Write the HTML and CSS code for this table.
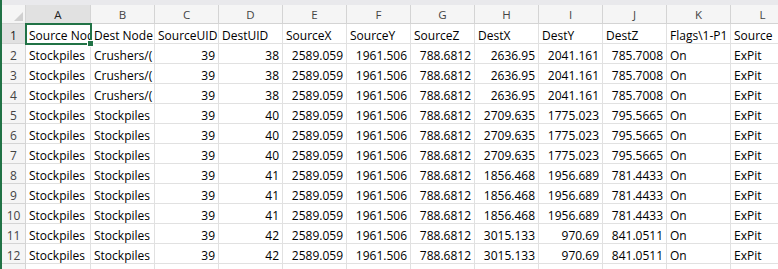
FILE: index.html
```html
<!DOCTYPE html>
<html lang="en">
  <head>
    <meta charset="UTF-8" />
    <title>Sheet1</title>
    <link rel="stylesheet" href="styles.css">
  </head>
  <body>
    <div class="window">
      <div class="edge"></div>
      <div class="sheet">
        <div class="top-strip"></div>
        <table class="grid">
          <thead>
            <tr>
              <th class="corner"><span class="tri"></span></th>
              <th class="col-a active">A</th>
              <th>B</th>
              <th>C</th>
              <th>D</th>
              <th>E</th>
              <th>F</th>
              <th>G</th>
              <th>H</th>
              <th>I</th>
              <th>J</th>
              <th>K</th>
              <th>L</th>
            </tr>
          </thead>
          <tbody>
            <tr>
              <th class="active">1</th>
              <td class="selected"><span class="txt">Source Node</span><span class="handle"></span></td>
              <td>Dest Node</td>
              <td>SourceUID</td>
              <td>DestUID</td>
              <td>SourceX</td>
              <td>SourceY</td>
              <td>SourceZ</td>
              <td>DestX</td>
              <td>DestY</td>
              <td>DestZ</td>
              <td>Flags\1-P1</td>
              <td>Source</td>
            </tr>
            <tr>
              <th>2</th>
              <td>Stockpiles</td><td>Crushers/(</td>
              <td class="num">39</td><td class="num">38</td>
              <td class="num">2589.059</td><td class="num">1961.506</td><td class="num">788.6812</td>
              <td class="num">2636.95</td><td class="num">2041.161</td><td class="num">785.7008</td>
              <td>On</td><td>ExPit</td>
            </tr>
            <tr>
              <th>3</th>
              <td>Stockpiles</td><td>Crushers/(</td>
              <td class="num">39</td><td class="num">38</td>
              <td class="num">2589.059</td><td class="num">1961.506</td><td class="num">788.6812</td>
              <td class="num">2636.95</td><td class="num">2041.161</td><td class="num">785.7008</td>
              <td>On</td><td>ExPit</td>
            </tr>
            <tr>
              <th>4</th>
              <td>Stockpiles</td><td>Crushers/(</td>
              <td class="num">39</td><td class="num">38</td>
              <td class="num">2589.059</td><td class="num">1961.506</td><td class="num">788.6812</td>
              <td class="num">2636.95</td><td class="num">2041.161</td><td class="num">785.7008</td>
              <td>On</td><td>ExPit</td>
            </tr>
            <tr>
              <th>5</th>
              <td>Stockpiles</td><td>Stockpiles</td>
              <td class="num">39</td><td class="num">40</td>
              <td class="num">2589.059</td><td class="num">1961.506</td><td class="num">788.6812</td>
              <td class="num">2709.635</td><td class="num">1775.023</td><td class="num">795.5665</td>
              <td>On</td><td>ExPit</td>
            </tr>
            <tr>
              <th>6</th>
              <td>Stockpiles</td><td>Stockpiles</td>
              <td class="num">39</td><td class="num">40</td>
              <td class="num">2589.059</td><td class="num">1961.506</td><td class="num">788.6812</td>
              <td class="num">2709.635</td><td class="num">1775.023</td><td class="num">795.5665</td>
              <td>On</td><td>ExPit</td>
            </tr>
            <tr>
              <th>7</th>
              <td>Stockpiles</td><td>Stockpiles</td>
              <td class="num">39</td><td class="num">40</td>
              <td class="num">2589.059</td><td class="num">1961.506</td><td class="num">788.6812</td>
              <td class="num">2709.635</td><td class="num">1775.023</td><td class="num">795.5665</td>
              <td>On</td><td>ExPit</td>
            </tr>
            <tr>
              <th>8</th>
              <td>Stockpiles</td><td>Stockpiles</td>
              <td class="num">39</td><td class="num">41</td>
              <td class="num">2589.059</td><td class="num">1961.506</td><td class="num">788.6812</td>
              <td class="num">1856.468</td><td class="num">1956.689</td><td class="num">781.4433</td>
              <td>On</td><td>ExPit</td>
            </tr>
            <tr>
              <th>9</th>
              <td>Stockpiles</td><td>Stockpiles</td>
              <td class="num">39</td><td class="num">41</td>
              <td class="num">2589.059</td><td class="num">1961.506</td><td class="num">788.6812</td>
              <td class="num">1856.468</td><td class="num">1956.689</td><td class="num">781.4433</td>
              <td>On</td><td>ExPit</td>
            </tr>
            <tr>
              <th>10</th>
              <td>Stockpiles</td><td>Stockpiles</td>
              <td class="num">39</td><td class="num">41</td>
              <td class="num">2589.059</td><td class="num">1961.506</td><td class="num">788.6812</td>
              <td class="num">1856.468</td><td class="num">1956.689</td><td class="num">781.4433</td>
              <td>On</td><td>ExPit</td>
            </tr>
            <tr>
              <th>11</th>
              <td>Stockpiles</td><td>Stockpiles</td>
              <td class="num">39</td><td class="num">42</td>
              <td class="num">2589.059</td><td class="num">1961.506</td><td class="num">788.6812</td>
              <td class="num">3015.133</td><td class="num">970.69</td><td class="num">841.0511</td>
              <td>On</td><td>ExPit</td>
            </tr>
            <tr>
              <th>12</th>
              <td>Stockpiles</td><td>Stockpiles</td>
              <td class="num">39</td><td class="num">42</td>
              <td class="num">2589.059</td><td class="num">1961.506</td><td class="num">788.6812</td>
              <td class="num">3015.133</td><td class="num">970.69</td><td class="num">841.0511</td>
              <td>On</td><td>ExPit</td>
            </tr>
            <tr>
              <th></th>
              <td></td><td></td><td></td><td></td><td></td><td></td>
              <td></td><td></td><td></td><td></td><td></td><td></td>
            </tr>
          </tbody>
        </table>
      </div>
    </div>
  </body>
</html>
```

FILE: styles.css
```css
*,
*::before,
*::after {
  box-sizing: border-box;
}
:root {
  --green: #217346;
  --grid: #e1e1e1;
  --head-bg: #f5f5f5;
  --head-line: #d4d4d4;
  --head-active: #e1e1e1;
  --head-text: #444;
}
body {
  margin: 0;
  background: #fff;
  font-family: "Open Sans", "Liberation Sans", sans-serif;
  font-size: 12px;
  color: #000;
}
.window {
  display: flex;
  height: 269px;
  overflow: hidden;
}
.edge {
  flex: 0 0 2px;
  background: var(--green);
}
.sheet {
  flex: 1;
  overflow: hidden;
}
.top-strip {
  height: 5px;
  background: #e9e9ec;
}
.grid {
  table-layout: fixed;
  border-collapse: separate;
  border-spacing: 0;
  width: 793px;
}
.grid th,
.grid td {
  width: 64px;
  height: 20px;
  padding: 0 3px;
  border-right: 1px solid var(--grid);
  border-bottom: 1px solid var(--grid);
  white-space: nowrap;
  overflow: hidden;
  text-overflow: clip;
  line-height: 15px;
  vertical-align: bottom;
  text-align: left;
}
.grid th {
  background: var(--head-bg);
  color: var(--head-text);
  font-weight: normal;
  text-align: center;
  border-color: var(--head-line);
  font-size: 11.5px;
}
.grid thead th {
  height: 19px;
  line-height: 16px;
}
.grid tbody th {
  padding: 0;
  font-size: 12px;
}
.grid th.corner {
  width: 24px;
  position: relative;
}
.grid th.col-a {
  width: 65px;
}
.grid th.active {
  background: var(--head-active);
  color: #222;
}
.tri {
  position: absolute;
  right: 2px;
  bottom: 2px;
  width: 0;
  height: 0;
  border-left: 9px solid transparent;
  border-bottom: 9px solid #d0d0d0;
}
.grid td.num {
  text-align: right;
}
/* active cell */
.grid td.selected {
  position: relative;
  overflow: visible;
  outline: 2px solid var(--green);
  outline-offset: -1px;
}
.txt {
  display: block;
  overflow: hidden;
  margin-right: -3px;
}
.handle {
  position: absolute;
  right: -4px;
  bottom: -4px;
  width: 7px;
  height: 7px;
  background: var(--green);
  border: 1px solid #fff;
}
```
